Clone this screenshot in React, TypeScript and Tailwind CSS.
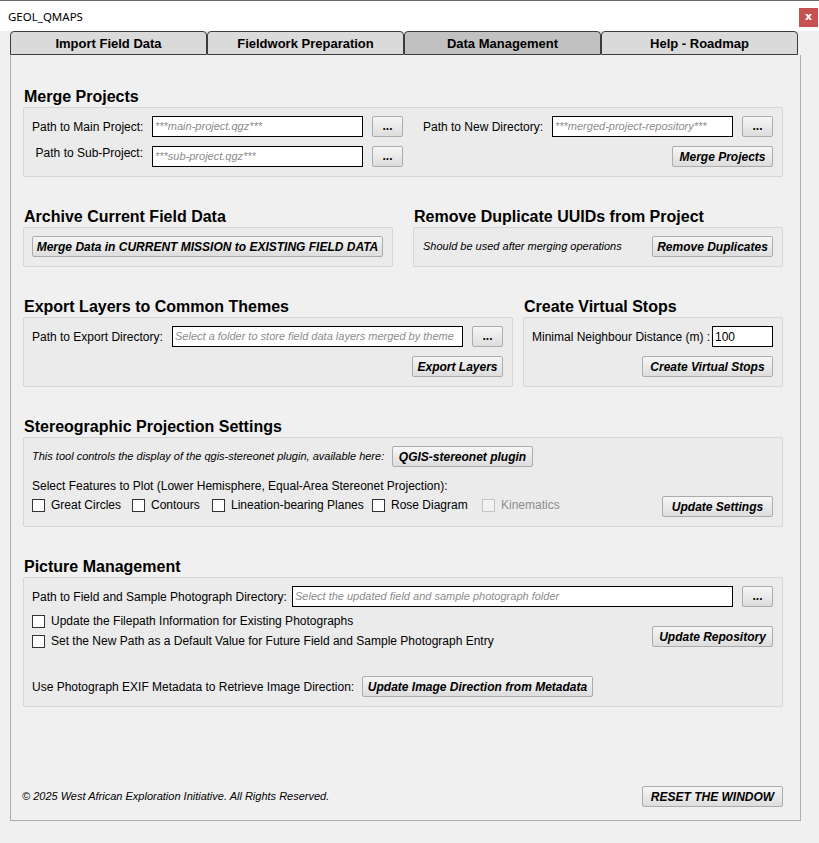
import { ReactNode } from "react";
import clsx from "clsx";

const Btn = ({ children, className, plain }: { children: ReactNode; className?: string; plain?: boolean }) => (
  <div
    className={clsx(
      "h-[21px] shrink-0 flex items-center justify-center border border-[#acacac] rounded-[2px] bg-linear-to-b from-[#f6f6f6] to-[#dddddd] text-[12px] font-bold text-black leading-none whitespace-nowrap",
      !plain && "italic",
      className
    )}
  >
    {children}
  </div>
);

const Dots = () => <Btn plain className="ml-[9px] w-[31px] pb-[2px]">...</Btn>;

const Label = ({ children, className }: { children: ReactNode; className?: string }) => (
  <span className={clsx("shrink-0 whitespace-nowrap text-[12px] leading-[14px]", className)}>{children}</span>
);

const Field = ({ text, className, value }: { text: string; className?: string; value?: boolean }) => (
  <div
    className={clsx(
      "h-[21px] shrink-0 flex items-center border border-black bg-white px-[2px] whitespace-nowrap overflow-hidden",
      value ? "text-[12px] text-black" : "text-[11px] italic text-[#8c8c8c]",
      className
    )}
  >
    {text}
  </div>
);

const Check = ({ label, className, disabled }: { label: string; className?: string; disabled?: boolean }) => (
  <div className={clsx("flex items-center h-[13px] shrink-0", className)}>
    <div
      className={clsx(
        "w-[13px] h-[13px] shrink-0 border",
        disabled ? "border-[#c4c4c4] bg-[#f2f2f2]" : "border-[#333333] bg-white"
      )}
    />
    <span
      className={clsx(
        "ml-[6px] text-[12px] leading-[13px] whitespace-nowrap",
        disabled ? "text-[#8d8d8d]" : "text-black"
      )}
    >
      {label}
    </span>
  </div>
);

const Section = ({ title, children, className }: { title: string; children: ReactNode; className?: string }) => (
  <div className={clsx("flex flex-col shrink-0", className)}>
    <h2 className="h-[18px] mb-px pl-px text-[16px] leading-[18px] font-bold text-black whitespace-nowrap">{title}</h2>
    <div className="border border-[#d6d6d6] rounded-[2px] bg-[#ebebeb] pl-[8px] pr-[9px] pt-[8px] pb-[9px]">
      {children}
    </div>
  </div>
);

const tabs = ["Import Field Data", "Fieldwork Preparation", "Data Management", "Help - Roadmap"];

export default function App() {
  return (
    <div className="w-[819px] h-[843px] bg-[#f0f0f0] font-['Liberation_Sans',Arial,sans-serif] text-black overflow-hidden">
      {/* title bar */}
      <div className="h-[31px] bg-white border-t border-[#6a6a6a] flex items-start justify-between">
        <span className="mt-[7px] ml-[8px] text-[11.5px] font-['Noto_Sans',sans-serif] text-black">GEOL_QMAPS</span>
        <div className="mt-[7px] mr-px w-[19px] h-[19px] bg-[#c75050] flex items-center justify-center text-white text-[11px] font-bold font-['DejaVu_Sans',sans-serif] leading-none pb-[2px]">
          x
        </div>
      </div>

      {/* tabs */}
      <div className="flex pl-[10px] h-[24px]">
        {tabs.map((t, i) => (
          <div
            key={t}
            className={clsx(
              "w-[197px] h-[24px] flex items-center justify-center pt-[2px] border border-[#3c3c3c] rounded-t-[4px] text-[13px] font-bold",
              i === 2 ? "bg-[#c1c1c1]" : "bg-[#dadada]"
            )}
          >
            {t}
          </div>
        ))}
      </div>

      {/* panel */}
      <div className="ml-[10px] w-[791px] h-[766px] border border-t-0 border-[#adadad] flex flex-col pl-[12px] pr-[17px] pt-[33px] pb-[13px]">
        <Section title="Merge Projects">
          <div className="flex">
            <div className="flex flex-col gap-[9px] shrink-0">
              <div className="flex items-center h-[21px]">
                <Label className="w-[111px] text-right">Path to Main Project:</Label>
                <Field text="***main-project.qgz***" className="ml-[9px] w-[211px]" />
                <Dots />
              </div>
              <div className="flex items-center h-[21px]">
                <Label className="w-[111px] text-right mb-[7px]">Path to Sub-Project:</Label>
                <Field text="***sub-project.qgz***" className="ml-[9px] w-[211px]" />
                <Dots />
              </div>
            </div>
            <div className="ml-[20px] flex-1 flex flex-col items-end gap-[9px]">
              <div className="flex items-center w-full">
                <Label className="w-[129px]">Path to New Directory:</Label>
                <Field text="***merged-project-repository***" className="w-[181px]" />
                <Dots />
              </div>
              <Btn className="w-[101px]">Merge Projects</Btn>
            </div>
          </div>
        </Section>

        <div className="mt-[31px] flex gap-[20px]">
          <Section title="Archive Current Field Data" className="w-[370px]">
            <Btn className="w-[351px]">Merge Data in CURRENT MISSION to EXISTING FIELD DATA</Btn>
          </Section>
          <Section title="Remove Duplicate UUIDs from Project" className="w-[370px]">
            <div className="flex items-center justify-between pl-px">
              <span className="text-[11px] italic whitespace-nowrap">Should be used after merging operations</span>
              <Btn className="w-[121px]">Remove Duplicates</Btn>
            </div>
          </Section>
        </div>

        <div className="mt-[31px] flex gap-[10px]">
          <Section title="Export Layers to Common Themes" className="w-[490px]">
            <div className="flex flex-col items-end gap-[9px]">
              <div className="flex items-center w-full">
                <Label className="w-[140px]">Path to Export Directory:</Label>
                <Field text="Select a folder to store field data layers merged by theme" className="w-[291px]" />
                <Dots />
              </div>
              <Btn className="w-[91px]">Export Layers</Btn>
            </div>
          </Section>
          <Section title="Create Virtual Stops" className="w-[260px]">
            <div className="flex flex-col items-end gap-[9px]">
              <div className="flex items-center justify-between w-full">
                <Label>Minimal Neighbour Distance (m) :</Label>
                <Field text="100" value className="w-[61px]" />
              </div>
              <Btn className="w-[131px]">Create Virtual Stops</Btn>
            </div>
          </Section>
        </div>

        <Section title="Stereographic Projection Settings" className="mt-[31px]">
          <div className="flex items-center">
            <span className="w-[360px] shrink-0 text-[11px] italic whitespace-nowrap">
              This tool controls the display of the qgis-stereonet plugin, available here:
            </span>
            <Btn className="w-[141px]">QGIS-stereonet plugin</Btn>
          </div>
          <div className="mt-[12px] h-[14px] leading-[14px] text-[12px] whitespace-nowrap">
            Select Features to Plot (Lower Hemisphere, Equal-Area Stereonet Projection):
          </div>
          <div className="mt-[3px] flex items-center">
            <Check label="Great Circles" className="w-[100px] -mt-[2px]" />
            <Check label="Contours" className="w-[80px] -mt-[2px]" />
            <Check label="Lineation-bearing Planes" className="w-[160px] -mt-[2px]" />
            <Check label="Rose Diagram" className="w-[110px] -mt-[2px]" />
            <Check label="Kinematics" disabled className="-mt-[2px]" />
            <Btn className="ml-auto w-[111px]">Update Settings</Btn>
          </div>
        </Section>

        <Section title="Picture Management" className="mt-[31px]">
          <div className="flex items-center">
            <Label className="w-[260px]">Path to Field and Sample Photograph Directory:</Label>
            <Field text="Select the updated field and sample photograph folder" className="w-[441px]" />
            <Dots />
          </div>
          <div className="flex items-start justify-between">
            <div className="mt-[8px] flex flex-col gap-[7px]">
              <Check label="Update the Filepath Information for Existing Photographs" />
              <Check label="Set the New Path as a Default Value for Future Field and Sample Photograph Entry" />
            </div>
            <Btn className="mt-[19px] w-[121px]">Update Repository</Btn>
          </div>
          <div className="mt-[28px] flex items-center">
            <Label className="w-[330px]">Use Photograph EXIF Metadata to Retrieve Image Direction:</Label>
            <Btn className="w-[231px]">Update Image Direction from Metadata</Btn>
          </div>
        </Section>

        <div className="mt-auto flex items-center justify-between -ml-px">
          <span className="text-[11px] italic whitespace-nowrap">
            © 2025 West African Exploration Initiative. All Rights Reserved.
          </span>
          <Btn className="w-[141px]">RESET THE WINDOW</Btn>
        </div>
      </div>
    </div>
  );
}
